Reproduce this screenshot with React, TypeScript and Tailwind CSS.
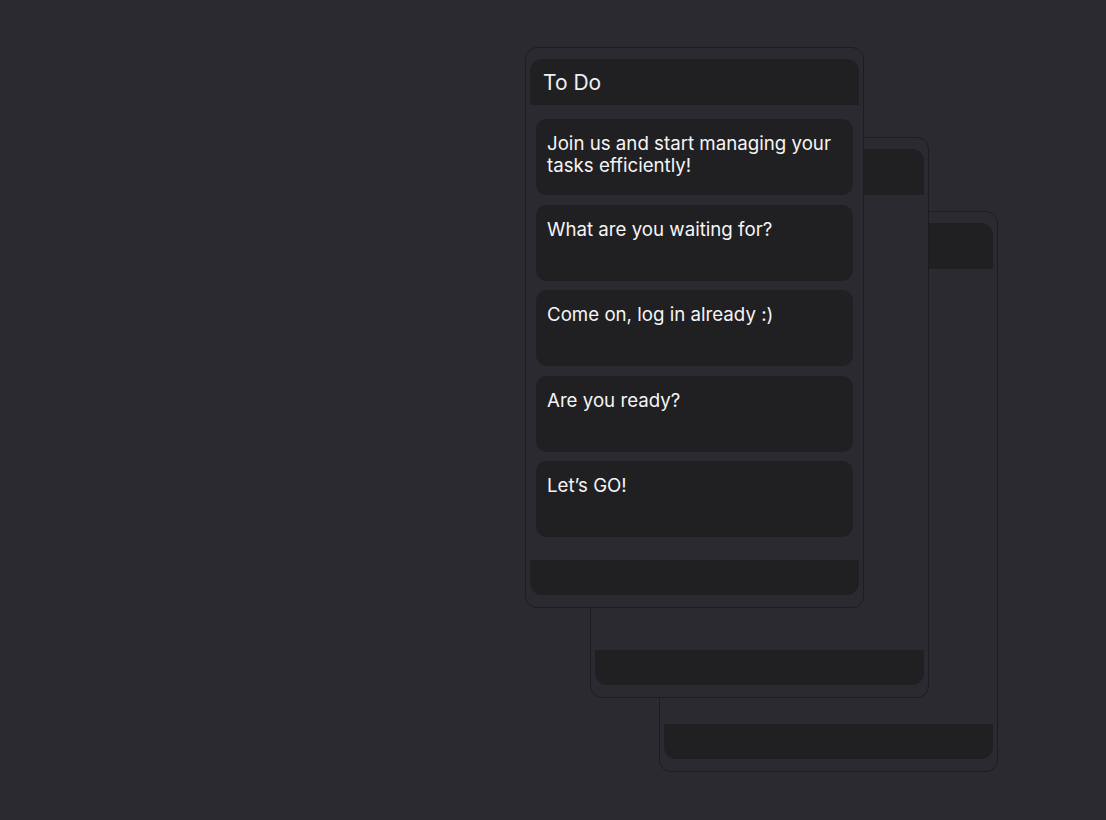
import React from "react";

const tasks = [
  "Join us and start managing your tasks efficiently!",
  "What are you waiting for?",
  "Come on, log in already :)",
  "Are you ready?",
  "Let’s GO!",
];

type ColumnProps = {
  title?: string;
  items?: string[];
  className?: string;
};

const Column = ({ title, items = [], className = "" }: ColumnProps) => {
  return (
    <div
      className={`absolute w-[339px] h-[561px] flex flex-col px-[4px] pt-[11px] pb-[12px] rounded-[12px] border border-[#1d1d20] bg-[#2b2a30] ${className}`}
    >
      <div className="h-[46px] shrink-0 flex items-center px-[13px] rounded-t-[12px] bg-[#202023]">
        {title && (
          <span className="text-[21px] text-[#f0f0f1] pt-[1px]">{title}</span>
        )}
      </div>
      <div className="flex-1 flex flex-col gap-[9.5px] px-[6px] pt-[14px]">
        {items.map((item) => (
          <div
            key={item}
            className="h-[76px] shrink-0 rounded-[11px] bg-[#202023] px-[11px] pt-[14px] text-[18.7px] leading-[22px] text-[#f5f5f6]"
          >
            {item}
          </div>
        ))}
      </div>
      <div className="h-[35px] shrink-0 rounded-b-[12px] bg-[#202023]" />
    </div>
  );
};

export default function App() {
  return (
    <div
      className="w-full h-[820px] bg-[#2b2a30] overflow-hidden"
      style={{ fontFamily: "Inter, 'Noto Sans', sans-serif" }}
    >
      <div className="relative w-full h-full">
        <Column className="left-[659px] top-[211px]" />
        <Column className="left-[590px] top-[137px]" />
        <Column title="To Do" items={tasks} className="left-[525px] top-[47px]" />
      </div>
    </div>
  );
}
